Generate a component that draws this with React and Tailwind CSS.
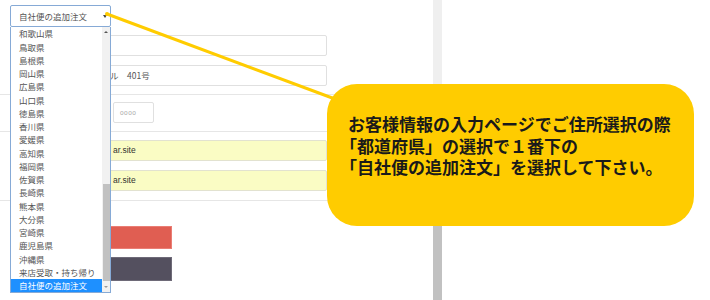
import React from "react";

const prefs = [
  "和歌山県",
  "鳥取県",
  "島根県",
  "岡山県",
  "広島県",
  "山口県",
  "徳島県",
  "香川県",
  "愛媛県",
  "高知県",
  "福岡県",
  "佐賀県",
  "長崎県",
  "熊本県",
  "大分県",
  "宮崎県",
  "鹿児島県",
  "沖縄県",
  "来店受取・持ち帰り",
  "自社便の追加注文",
];

const jp = "font-['Noto_Sans_CJK_JP','Liberation_Sans',sans-serif]";

function Sep() {
  return <div className="h-px bg-[#e6e6e6] w-full" />;
}

export default function App() {
  return (
    <div className={`relative w-[710px] h-[300px] overflow-hidden bg-white flex ${jp}`}>
      {/* left form panel */}
      <div className="w-[433px] flex flex-col">
        <div className="pt-[5px] pl-[10px]">
          <div className="w-[101px] h-[22px] border border-[#86aad6] rounded-[2px] bg-white flex items-center pl-[8px] pr-[3px] text-[8.5px] text-[#555]">
            <span className="flex-1">自社便の追加注文</span>
            <span className="w-0 h-0 border-l-[2px] border-r-[2px] border-t-[3px] border-l-transparent border-r-transparent border-t-[#444]" />
          </div>
        </div>
        <div className="mt-[8px] ml-[28px] w-[299px] h-[21px] border border-[#e0e0e0] rounded-[2px]" />
        <div className="mt-[9px] ml-[28px] w-[299px] h-[21px] border border-[#e0e0e0] rounded-[2px] flex items-center pl-[81px] text-[8.5px] text-[#555]">
          ル　401号
        </div>
        <div className="mt-[8px]">
          <Sep />
        </div>
        <div className="mt-[7px] ml-[113px] w-[41px] h-[21px] border border-[#e0e0e0] rounded-[2px] flex items-center pl-[6px] text-[6.5px] tracking-[0.5px] text-[#aaa] font-['Liberation_Sans',sans-serif]">
          oooo
        </div>
        <div className="mt-[8px]">
          <Sep />
        </div>
        <div className="mt-[8px] ml-[28px] w-[299px] h-[21px] border border-[#e2e2d0] bg-[#fafcc4] rounded-[2px] flex items-center pl-[84px] text-[8.5px] text-[#333] font-['Liberation_Sans',sans-serif]">
          ar.site
        </div>
        <div className="mt-[9px] ml-[28px] w-[299px] h-[21px] border border-[#e2e2d0] bg-[#fafcc4] rounded-[2px] flex items-center pl-[84px] text-[8.5px] text-[#333] font-['Liberation_Sans',sans-serif]">
          ar.site
        </div>
        <div className="mt-[9px]">
          <Sep />
        </div>
        <div className="mt-[25px] ml-[28px] w-[144px] h-[23px] bg-[#e05e52] border border-[#ea7d74]" />
        <div className="mt-[8px] ml-[28px] w-[144px] h-[24px] bg-[#54505f] border border-[#6e6a78]" />
      </div>

      {/* page scrollbar */}
      <div className="w-[9px] h-full bg-[#efefef] flex flex-col">
        <div className="h-[190px]" />
        <div className="flex-1 bg-[#c1c1c1]" />
      </div>

      <div className="flex-1 bg-white" />

      {/* open dropdown list */}
      <div className="absolute left-[10px] top-[27px] w-[101px] h-[266px] border border-[#86aad6] border-t-0 bg-white flex">
        <div className="flex-1 flex flex-col">
          {prefs.map((p, i) => {
            const sel = i === prefs.length - 1;
            return (
              <div
                key={p}
                className={
                  sel
                    ? "h-[13.25px] flex items-center pl-[8px] text-[8.5px] leading-none bg-[#1e90ff] text-white whitespace-nowrap"
                    : "h-[13.25px] flex items-center pl-[8px] text-[8.5px] leading-none text-[#555] whitespace-nowrap"
                }
              >
                {p}
              </div>
            );
          })}
        </div>
        <div className="w-[8px] h-full bg-[#f1f1f1] flex flex-col items-center">
          <div className="h-[10px] flex items-center justify-center">
            <span className="w-0 h-0 border-l-[2px] border-r-[2px] border-b-[2px] border-l-transparent border-r-transparent border-b-[#555]" />
          </div>
          <div className="h-[147px]" />
          <div className="w-[7px] h-[97px] bg-[#c1c1c1]" />
          <div className="flex-1 flex items-center justify-center">
            <span className="w-0 h-0 border-l-[2px] border-r-[2px] border-t-[2px] border-l-transparent border-r-transparent border-t-[#999]" />
          </div>
        </div>
      </div>

      {/* pointer line */}
      <svg className="absolute left-0 top-0" width="710" height="300" viewBox="0 0 710 300">
        <circle cx="107" cy="14" r="2" fill="#ffcc00" />
        <line x1="107" y1="14" x2="335" y2="99" stroke="#ffcc00" strokeWidth="3" />
      </svg>

      {/* callout */}
      <div className="absolute left-[327px] top-[84px] w-[367px] h-[142px] rounded-[30px] bg-[#ffcc00] pl-[21px] pt-[29px]">
        <div className="flex flex-col text-[17px] leading-none font-bold text-[#1a1a1a] whitespace-nowrap">
          <div className="h-[21.5px] flex items-center">お客様情報の入力ページでご住所選択の際</div>
          <div className="h-[21.5px] flex items-center -ml-[8px]">「都道府県」の選択で１番下の</div>
          <div className="h-[21.5px] flex items-center -ml-[8px]">「自社便の追加注文」を選択して下さい。</div>
        </div>
      </div>
    </div>
  );
}
